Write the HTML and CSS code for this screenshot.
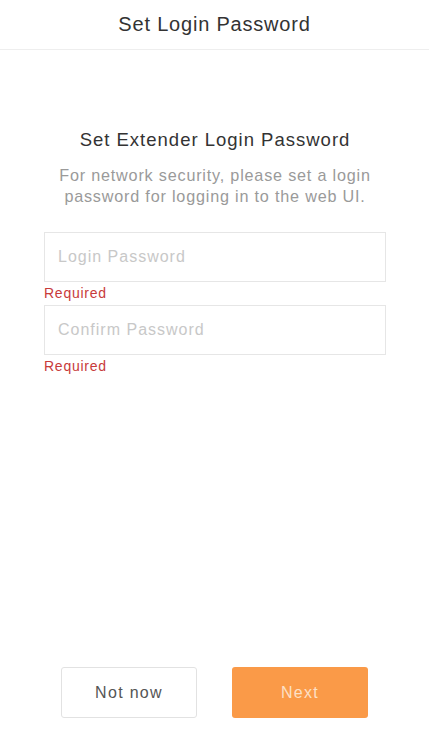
FILE: index.html
```html
<!DOCTYPE html>
<html lang="en">
<head>
    <meta charset="UTF-8">
    <title>Set Login Password</title>
    <link rel="stylesheet" href="styles.css">
</head>
<body>
    <div class="page">
        <div class="top-bar">Set Login Password</div>

        <div class="content">
            <h2>Set Extender Login Password</h2>
            <p class="desc">For network security, please set a login password for logging in to the web UI.</p>

            <div class="field">
                <input type="password" id="loginPwd" placeholder="Login Password">
                <div class="error">Required</div>
            </div>
            <div class="field">
                <input type="password" id="confirmPwd" placeholder="Confirm Password">
                <div class="error">Required</div>
            </div>
        </div>

        <div class="actions">
            <button class="btn btn-light">Not now</button>
            <button class="btn btn-orange">Next</button>
        </div>
    </div>
</body>
</html>
```

FILE: styles.css
```css
body {
    font-family: 'Liberation Sans', Arial, sans-serif;
    background-color: #fff;
    color: #333;
    margin: 0;
    padding: 0;
}

.page {
    display: flex;
    flex-direction: column;
    height: 100vh;
}

.top-bar {
    height: 49px;
    line-height: 49px;
    text-align: center;
    font-size: 20px;
    letter-spacing: 0.8px;
    color: #333;
    border-bottom: 1px solid #eeeeee;
}

.content {
    flex: 1;
    padding: 78px 43px 0 44px;
}

.content h2 {
    margin: 0;
    font-size: 18.5px;
    letter-spacing: 1px;
    font-weight: normal;
    text-align: center;
    color: #333;
    line-height: 24px;
}

.desc {
    margin: 13px -8px 25px;
    font-size: 16.2px;
    letter-spacing: 0.8px;
    line-height: 21px;
    text-align: center;
    color: #9a9a9a;
}

.field input {
    display: block;
    box-sizing: border-box;
    width: 100%;
    height: 50px;
    padding: 0 13px;
    border: 1px solid #e6e6e6;
    border-radius: 0;
    font-family: inherit;
    font-size: 16px;
    letter-spacing: 1px;
    color: #333;
    outline: none;
}

.field input::placeholder {
    color: #c8c8c8;
}

.error {
    color: #c83a3a;
    font-size: 14px;
    letter-spacing: 0.75px;
    line-height: 23px;
}

.actions {
    display: flex;
    justify-content: center;
    gap: 35px;
    padding-bottom: 13px;
}

.btn {
    width: 136px;
    height: 51px;
    border-radius: 3px;
    font-family: inherit;
    font-size: 16px;
    letter-spacing: 1.3px;
    cursor: pointer;
}

.btn-light {
    background-color: #fff;
    border: 1px solid #e2e2e2;
    color: #555;
}

.btn-orange {
    background-color: #fa9a48;
    border: none;
    color: #fde0c6;
}
```
